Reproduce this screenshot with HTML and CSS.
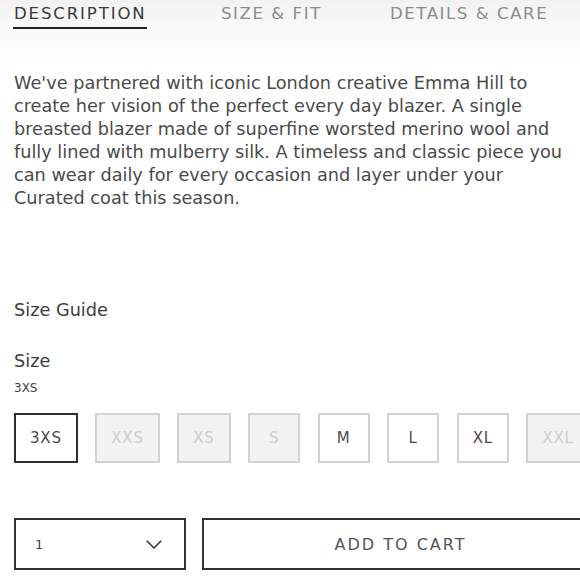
FILE: index.html
```html
<!DOCTYPE html>
<html lang="en">
<head>
<meta charset="utf-8">
<title>Product details</title>
<link rel="stylesheet" href="styles.css">
</head>
<body>
<div class="page">
  <nav class="tabs">
    <div class="tab tab-active"><span class="tab-label">DESCRIPTION</span></div>
    <div class="tab"><span class="tab-label">SIZE &amp; FIT</span></div>
    <div class="tab"><span class="tab-label">DETAILS &amp; CARE</span></div>
  </nav>

  <p class="description">We've partnered with iconic London creative Emma Hill to<br>create her vision of the perfect every day blazer. A single<br>breasted blazer made of superfine worsted merino wool and<br>fully lined with mulberry silk. A timeless and classic piece you<br>can wear daily for every occasion and layer under your<br>Curated coat this season.</p>

  <div class="size-guide">Size Guide</div>

  <div class="size-title">Size</div>
  <div class="size-selected">3XS</div>

  <div class="sizes">
    <div class="size size-current">3XS</div>
    <div class="size size-disabled">XXS</div>
    <div class="size size-disabled">XS</div>
    <div class="size size-disabled">S</div>
    <div class="size">M</div>
    <div class="size">L</div>
    <div class="size">XL</div>
    <div class="size size-disabled">XXL</div>
  </div>

  <div class="purchase">
    <div class="qty">
      <span class="qty-value">1</span>
      <svg class="chevron" width="16" height="9" viewBox="0 0 16 9"><path d="M0.8 0.8 L8 8 L15.2 0.8" fill="none" stroke="#333" stroke-width="1.5"/></svg>
    </div>
    <div class="add-to-cart">ADD TO CART</div>
  </div>
</div>
</body>
</html>
```

FILE: styles.css
```css
html, body {
  margin: 0;
  padding: 0;
}
body {
  overflow: hidden;
  background: linear-gradient(180deg, #f2f2f2 0px, #fafafa 30px, #ffffff 70px);
  font-family: "DejaVu Sans", "Liberation Sans", sans-serif;
  color: #444;
  width: 580px;
  height: 580px;
}
.page {
  width: 585px;
  padding-left: 14px;
}
.tabs {
  display: grid;
  grid-template-columns: 207px 169px auto;
  padding-top: 4px;
}
.tab {
  font-size: 16.5px;
  line-height: 20px;
  letter-spacing: 1.6px;
  color: #8c8c8c;
  white-space: nowrap;
}
.tab-label {
  display: inline-block;
  padding-bottom: 3px;
  border-bottom: 2px solid transparent;
}
.tab-active {
  color: #3a3a3a;
  letter-spacing: 1.9px;
}
.tab-active .tab-label {
  border-bottom-color: #222;
  margin-left: -1px;
  padding-left: 1px;
}
.description {
  margin: 43px 0 0;
  font-size: 17.7px;
  line-height: 23px;
  white-space: nowrap;
  color: #4a4a4a;
}
.size-guide {
  margin-top: 89px;
  font-size: 17.7px;
  line-height: 23px;
  color: #3d3d3d;
}
.size-title {
  margin-top: 28px;
  font-size: 17.7px;
  line-height: 23px;
  color: #3d3d3d;
}
.size-selected {
  margin-top: 7px;
  font-size: 12px;
  line-height: 16px;
  color: #3d3d3d;
}
.sizes {
  display: flex;
  gap: 17.5px;
  margin-top: 17px;
}
.size {
  flex: none;
  box-sizing: border-box;
  min-width: 52px;
  height: 50px;
  padding: 0 14px;
  display: flex;
  align-items: center;
  justify-content: center;
  border: 2px solid #d2d2d2;
  background: #fff;
  font-size: 15px;
  letter-spacing: 0.8px;
  color: #4a4a4a;
}
.size-current {
  border-color: #2e2e2e;
}
.size-disabled {
  background: #f2f2f2;
  color: #cdcdcd;
}
.purchase {
  display: flex;
  gap: 16px;
  margin-top: 55px;
}
.qty {
  flex: none;
  box-sizing: border-box;
  width: 172px;
  height: 52px;
  border: 2px solid #333;
  padding: 0 22px 0 19px;
  display: flex;
  align-items: center;
  justify-content: space-between;
  background: #fff;
}
.qty-value {
  font-size: 13px;
  color: #444;
}
.chevron {
  display: block;
}
.add-to-cart {
  flex: 1;
  box-sizing: border-box;
  height: 52px;
  border: 2px solid #333;
  display: flex;
  align-items: center;
  justify-content: center;
  background: #fff;
  font-size: 16px;
  letter-spacing: 2px;
  color: #555;
}
```
